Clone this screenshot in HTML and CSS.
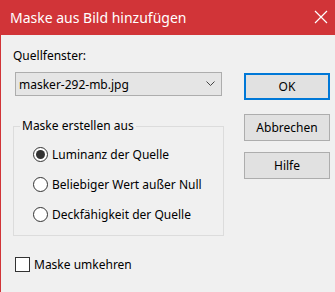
FILE: index.html
```html
<!DOCTYPE html>
<html>
<head>
    <title>Maske aus Bild hinzufügen</title>
    <meta charset="utf-8">
    <link rel="stylesheet" href="styles.css">
</head>
<body>
    <div class="dialog">
        <div class="titlebar">
            <span class="title">Maske aus Bild hinzufügen</span>
            <svg class="close" width="14" height="14" viewBox="0 0 14 14">
                <path d="M1 1 L13 13 M13 1 L1 13" stroke="#fff" stroke-width="1.2" fill="none"/>
            </svg>
        </div>
        <div class="content">
            <div class="left">
                <div class="field-label">Quellfenster:</div>
                <div class="combo">
                    <span>masker-292-mb.jpg</span>
                    <svg class="chevron" width="9" height="6" viewBox="0 0 9 6">
                        <path d="M0.5 0.5 L4.5 4.5 L8.5 0.5" stroke="#444" stroke-width="1" fill="none"/>
                    </svg>
                </div>
                <fieldset class="group">
                    <legend>Maske erstellen aus</legend>
                    <div class="options">
                        <div class="radio"><span class="dot checked"></span>Luminanz der Quelle</div>
                        <div class="radio"><span class="dot"></span>Beliebiger Wert außer Null</div>
                        <div class="radio"><span class="dot"></span>Deckfähigkeit der Quelle</div>
                    </div>
                </fieldset>
                <div class="check"><span class="box"></span>Maske umkehren</div>
            </div>
            <div class="buttons">
                <button class="btn btn-ok">OK</button>
                <button class="btn btn-cancel">Abbrechen</button>
                <button class="btn btn-help">Hilfe</button>
            </div>
        </div>
    </div>
</body>
</html>
```

FILE: styles.css
```css
body {
    margin: 0;
    background-color: #f0f0f0;
    font-family: "Noto Sans", sans-serif;
    font-size: 12px;
    color: #000;
}
.dialog {
    height: 292px;
    border-left: 1px solid #d13438;
    box-sizing: border-box;
}
.titlebar {
    height: 35px;
    background-color: #d13438;
    display: flex;
    align-items: center;
    justify-content: space-between;
    padding: 0 7px 0 9px;
}
.title {
    color: #fff;
    font-size: 14px;
}
.close {
    margin-bottom: 1px;
}
.content {
    display: flex;
    padding-left: 12px;
}
.left {
    width: 211px;
    padding-top: 13px;
}
.field-label {
    line-height: 16px;
}
.combo {
    margin: 8px 0 0 2px;
    width: 207px;
    height: 24px;
    box-sizing: border-box;
    border: 1px solid #adadad;
    background-color: #e5e5e5;
    display: flex;
    align-items: center;
    justify-content: space-between;
    padding: 0 6px 0 3px;
}
.group {
    margin: 22px 0 0 0;
    padding: 0;
    border: 1px solid #dcdcdc;
    min-width: 0;
}
.group legend {
    margin-left: 6px;
    padding: 0 2px;
    line-height: 16px;
}
.options {
    padding: 5px 0 6px 19px;
}
.radio {
    height: 30px;
    display: flex;
    align-items: center;
}
.dot {
    width: 15px;
    height: 15px;
    box-sizing: border-box;
    border: 1px solid #333;
    border-radius: 50%;
    background-color: #fff;
    margin-right: 4px;
    position: relative;
}
.dot.checked::after {
    content: "";
    position: absolute;
    left: 2px;
    top: 2px;
    width: 9px;
    height: 9px;
    border-radius: 50%;
    background-color: #333;
}
.check {
    margin: 21px 0 0 2px;
    height: 15px;
    display: flex;
    align-items: center;
}
.box {
    width: 15px;
    height: 15px;
    box-sizing: border-box;
    border: 1px solid #333;
    background-color: #fff;
    margin-right: 4px;
}
.buttons {
    margin-left: 20px;
    width: 86px;
    display: flex;
    flex-direction: column;
}
.btn {
    height: 27px;
    box-sizing: border-box;
    border: 1px solid #adadad;
    background-color: #e1e1e1;
    font-family: inherit;
    font-size: 12px;
    color: #000;
    padding: 0;
}
.btn-ok {
    margin-top: 38px;
    border: 2px solid #0078d7;
}
.btn-cancel {
    margin-top: 14px;
}
.btn-help {
    margin-top: 11px;
}
```
